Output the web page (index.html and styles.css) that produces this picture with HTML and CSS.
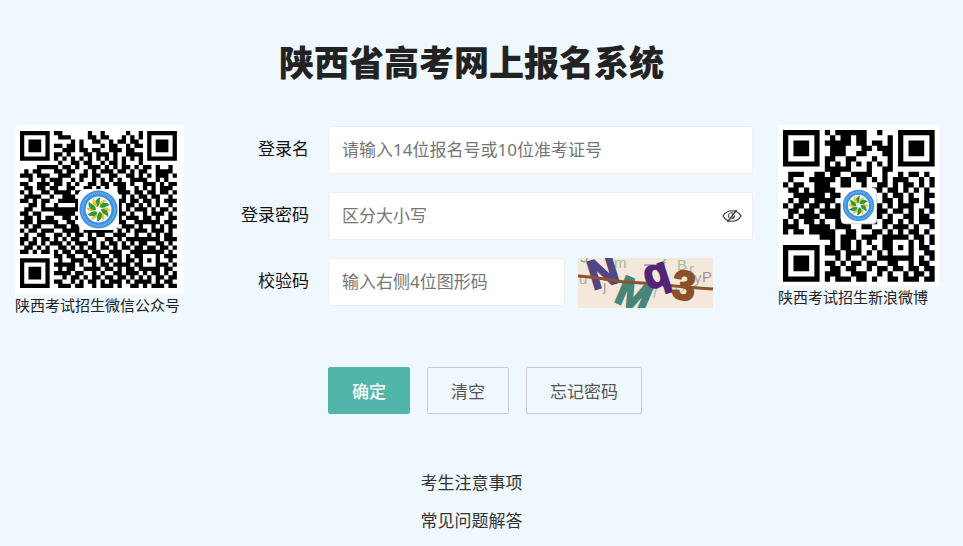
FILE: index.html
```html
<!DOCTYPE html>
<html lang="zh-CN">
<head>
    <meta charset="UTF-8">
    <meta name="viewport" content="width=device-width, initial-scale=1.0">
    <title>陕西省高考网上报名系统</title>
    <link rel="stylesheet" href="styles.css">
</head>
<body>
    <svg width="0" height="0" class="defs" aria-hidden="true">
        <defs>
            <g id="petal-pair">
                <path d="M-2 -3C-8 -8 -5 -16 3 -18C0 -13 5 -9 -2 -3Z" fill="#279b3d"/>
                <path d="M2 -4C0 -10 5 -16 12 -14C7 -12 9 -6 2 -4Z" fill="#f7bd35"/>
            </g>
            <g id="logo">
                <circle r="28" fill="#3b91df"/>
                <circle r="24" fill="none" stroke="#6db2ec" stroke-width="3" stroke-dasharray="2 1"/>
                <circle r="19" fill="#fff"/>
                <use href="#petal-pair"/>
                <use href="#petal-pair" transform="rotate(60)"/>
                <use href="#petal-pair" transform="rotate(120)"/>
                <use href="#petal-pair" transform="rotate(180)"/>
                <use href="#petal-pair" transform="rotate(240)"/>
                <use href="#petal-pair" transform="rotate(300)"/>
            </g>
        </defs>
    </svg>
    <h1 class="title">陕西省高考网上报名系统</h1>
    <main class="main">
        <figure class="qr">
            <svg class="qr-wechat" viewBox="0 0 169 169" role="img" aria-label="微信二维码">
                <rect width="169" height="169" fill="#fff"/>
                <path id="wechat-code" transform="translate(5 6) scale(4.24)"/>
                <rect x="63" y="64" width="41" height="41" rx="7" fill="#fff"/>
                <use href="#logo" transform="translate(83.5 84.5) scale(.68)"/>
            </svg>
            <figcaption>陕西考试招生微信公众号</figcaption>
        </figure>
        <form class="form" onsubmit="return false">
            <label for="username">登录名</label>
            <input type="text" id="username" placeholder="请输入14位报名号或10位准考证号">
            <label for="password">登录密码</label>
            <div class="password">
                <input type="password" id="password" placeholder="区分大小写">
                <button type="button" class="eye" id="eye" aria-label="显示密码">
                    <svg viewBox="0 0 20 14" width="20" height="14">
                        <path d="M1 7C5 0 15 0 19 7C15 14 5 14 1 7Z" fill="none" stroke="#333" stroke-width="1.2"/>
                        <path d="M11 4A3.3 3.3 0 0 0 7 9" fill="none" stroke="#333"/>
                        <path d="M14.5 1L5.5 13" stroke="#333" stroke-width="1.3"/>
                        <path d="M13 6A3.3 3.3 0 0 1 9 10Z" fill="#333"/>
                    </svg>
                </button>
            </div>
            <label for="code">校验码</label>
            <div class="code-row">
                <input type="text" id="code" placeholder="输入右侧4位图形码">
                <svg class="captcha" viewBox="0 0 135 50" role="img" aria-label="图形码">
                    <rect width="135" height="50" fill="#f4e8dc"/>
                    <path d="M3 2C5 5 9 4 9 0" fill="none" stroke="#8fae8d" stroke-width="1.5"/>
                    <path d="M66 7H73V11" fill="none" stroke="#a89aa2" stroke-width="1.5"/>
                    <g class="noise">
                        <text x="36" y="10" fill="#9abf98">m</text>
                        <text x="1" y="26" fill="#b5a6aa">u</text>
                        <text x="25" y="33" fill="#b99a9d">j</text>
                        <text x="84" y="12" fill="#8eb590">f</text>
                        <text x="99" y="12" fill="#9cc49a">B</text>
                        <text x="111" y="16" fill="#9fc09f">r</text>
                        <text x="116" y="25" fill="#a3aaa2">y</text>
                        <text x="124" y="24" fill="#a78f93">P</text>
                        <text x="75" y="40" fill="#9dbac4">/</text>
                        <text x="50" y="44" fill="#c5a0ad">i</text>
                    </g>
                    <path d="M88 20V27M98 30L101 37L107 30" fill="none" stroke="#a79fc2"/>
                    <g class="letters">
                        <text x="15" y="32" fill="#514683" stroke="#514683" transform="rotate(-17 15 32)">N</text>
                        <text x="35" y="43" fill="#468577" stroke="#468577" transform="rotate(23 35 43)">M</text>
                    </g>
                    <path d="M0 18C20 19 30 22 48 24C75 25 90 28 135 31" fill="none" stroke="#8d532f" stroke-width="3"/>
                    <g class="letters">
                        <text x="70" y="32" fill="#532377" stroke="#532377" transform="rotate(-18 70 32)">q</text>
                        <text x="93" y="40" fill="#8b5027" stroke="#8b5027" transform="rotate(7 93 40)">3</text>
                    </g>
                </svg>
            </div>
            <div class="buttons">
                <button type="submit" class="btn btn-primary">确定</button>
                <button type="reset" class="btn">清空</button>
                <button type="button" class="btn">忘记密码</button>
            </div>
        </form>
        <figure class="qr">
            <svg class="qr-weibo" viewBox="0 0 161 161" role="img" aria-label="微博二维码">
                <rect width="161" height="161" fill="#fff"/>
                <path id="weibo-code" transform="translate(5 5) scale(5.23)"/>
                <rect x="63" y="63" width="36" height="36" rx="4" fill="#ddd"/>
                <rect x="63" y="63" width="35" height="35" rx="4" fill="#fff"/>
                <use href="#logo" transform="translate(80.5 80.5) scale(.56)"/>
            </svg>
            <figcaption>陕西考试招生新浪微博</figcaption>
        </figure>
    </main>
    <nav class="links">
        <a href="#">考生注意事项</a>
        <a href="#">常见问题解答</a>
    </nav>
    <script src="script.js"></script>
</body>
</html>
```
FILE: styles.css
```css
* {
    box-sizing: border-box;
}
body {
    margin: 0;
    padding: 0 20px 0 0;
    background: #f0f8ff;
    color: #222;
    font-family: "Noto Sans", "Noto Sans CJK SC", sans-serif;
    font-size: 17px;
}
.defs {
    position: absolute;
}
.title {
    margin: 0;
    padding-top: 36px;
    font-size: 35px;
    line-height: 54px;
    font-weight: 900;
    text-align: center;
}
.main {
    display: grid;
    grid-template-columns: auto minmax(0, 1fr) auto;
    column-gap: 25px;
    align-items: start;
    padding: 35px 4px 0 15px;
}
.qr {
    margin: 0;
    font-size: 15px;
    line-height: 22px;
}
.qr svg {
    display: block;
}
.qr-wechat {
    width: 169px;
}
.qr-weibo {
    width: 161px;
}
.form {
    display: grid;
    grid-template-columns: 100px minmax(0, 1fr);
    column-gap: 19px;
    row-gap: 18px;
    padding-top: 1px;
}
.form label {
    line-height: 46px;
    text-align: right;
    color: #111;
}
.form input {
    width: 100%;
    height: 48px;
    padding: 0 13px 2px;
    border: 1px solid #eee;
    border-radius: 3px;
    background: #fff;
    color: #222;
    font: inherit;
}
.form input::placeholder {
    color: #757575;
}
.password {
    position: relative;
}
.eye {
    position: absolute;
    top: 0;
    right: 11px;
    height: 48px;
    padding: 0;
    border: none;
    background: none;
    cursor: pointer;
}
.eye svg {
    display: block;
}
.code-row {
    display: flex;
    gap: 13px;
    padding-right: 40px;
}
.code-row input {
    flex: 1;
    min-width: 0;
}
.captcha {
    flex: none;
    width: 135px;
    height: 50px;
}
.noise {
    font: 15px "Liberation Sans", sans-serif;
}
.letters {
    font: bold 41px "Liberation Sans", sans-serif;
    stroke-width: 2px;
}
.buttons {
    grid-column: 2;
    display: flex;
    gap: 17px;
    margin-top: 41px;
}
.btn {
    height: 47px;
    padding: 0 23px;
    border: 1px solid #ccc;
    border-radius: 2px;
    background: transparent;
    color: #555;
    font: inherit;
    cursor: pointer;
}
.btn-primary {
    border-color: #51b5a9;
    background: #51b5a9;
    color: #fff;
    font-weight: 500;
}
.links {
    display: flex;
    flex-direction: column;
    align-items: center;
    margin-top: 50px;
    line-height: 38px;
}
.links a {
    color: #333;
    text-decoration: none;
}
```
FILE: script.js
```js
const wechat = [
    '1111111011000000100100000100101111111',
    '1000001001110000110110001010101000001',
    '1011101000001010011001011011001011101',
    '1011101011011010000101100101101011101',
    '1011101000111011011001110110001011101',
    '1000001011010001101110100111101000001',
    '1111111010101010101010101010101111111',
    '0000000001001101100101101000100000000',
    '0000111110110100111010101101011010010',
    '0101100011011001010111011010110011110',
    '1110111001110011011001100110101011101',
    '0010010111001010010101010011110010100',
    '1100111011010100110110111010011101011',
    '0110110110011001101010011001010101110',
    '1010011011110110000000011101101101101',
    '0111100100111000000000001010110110010',
    '1101011001111100000000011011011010111',
    '0011010010000100000000010110101010010',
    '0110011111111100000000010101110101101',
    '1101100011111000000000011010010111010',
    '0110101100110100000000010111011010011',
    '1110111110011010000000011001111110110',
    '0101100011101101000000101110100101011',
    '1011011100111101111111010101110111010',
    '0100110011010110101100111001001010110',
    '1101011010101100110011010111111110111',
    '1011010111010111010101101010110011010',
    '0110101001101010110110101101101101101',
    '1101011010110111011001110011111111010',
    '0000000011011001101110110101100010111',
    '1111111001001110110101010110101010010',
    '1000001011111010010110111101100011101',
    '1011101001011001111011010110111110110',
    '1011101011110110010100110111010110101',
    '1011101000101101011011011010101011011',
    '1000001011001010110101110101111010110',
    '1111111001110110010111010011010111011'
];
const weibo = [
    '11111110101111110010001111111',
    '10000010010110110000101000001',
    '10111010111110110110101011101',
    '10111010011100011011101011101',
    '10111010011100110001101011101',
    '10000010110011000100101000001',
    '11111110101010101010101111111',
    '00000000111110001001100000000',
    '01110011011001111001001011010',
    '01000111110110110101011100101',
    '10110011100110010011010110101',
    '01101011110000000110110101010',
    '00111111011000000001011010011',
    '01011011110000000101101011010',
    '10110110101000000010101110011',
    '01101101111000000111011010101',
    '01011110111000000110100110110',
    '10101101001100000101101010111',
    '11100111101110011001011101001',
    '10110111110011000110101011010',
    '00000001110111011101111101101',
    '00000000010110101001100010101',
    '11111110110110100101101010110',
    '10000010111011101010100010011',
    '10111010001010010011111110101',
    '10111010110101101100110010110',
    '10111010011011001011011011011',
    '10000010111001110010100101101',
    '11111110101110110100110111011'
];

function drawCode(id, rows) {
    let d = '';
    rows.forEach(function(row, y) {
        for (const run of row.matchAll(/1+/g)) {
            d += `M${run.index} ${y}h${run[0].length}v1h-${run[0].length}z`;
        }
    });
    document.getElementById(id).setAttribute('d', d);
}

drawCode('wechat-code', wechat);
drawCode('weibo-code', weibo);

document.getElementById('eye').addEventListener('click', function() {
    const password = document.getElementById('password');
    password.type = password.type === 'password' ? 'text' : 'password';
});
```
